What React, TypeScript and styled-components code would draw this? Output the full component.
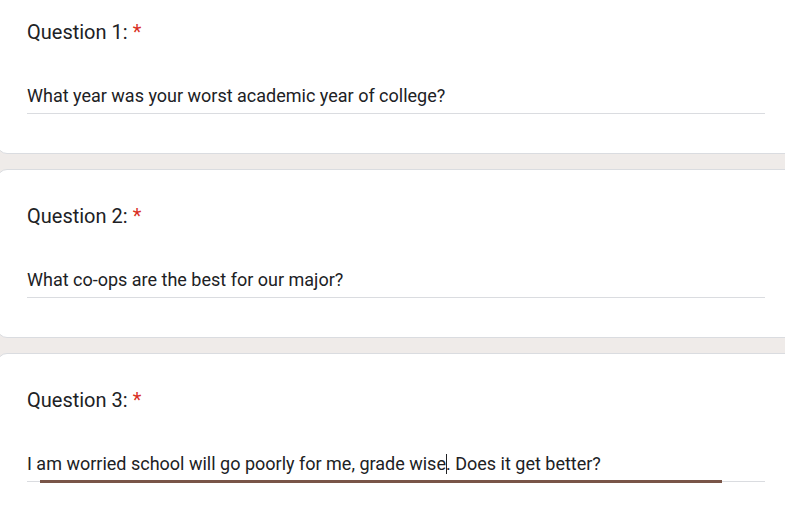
import React from "react";
import styled, { createGlobalStyle } from "styled-components";

const Global = createGlobalStyle`
  html, body { margin: 0; padding: 0; background: #efebe9; overflow: hidden; }
  body { font-family: Roboto, "Noto Sans", "Liberation Sans", sans-serif; color: #202124; }
`;

const Page = styled.div`
  display: flex;
  flex-direction: column;
  gap: 15px;
  margin-top: -15px;
  margin-left: -3px;
  width: 800px;
`;

const Card = styled.section`
  background: #ffffff;
  border: 1px solid #dadce0;
  border-radius: 10px;
  padding: 34px 29px 39px 29px;
  display: flex;
  flex-direction: column;
  gap: 40px;
`;

const Title = styled.div`
  font-size: 20px;
  line-height: 24px;
  font-weight: 400;
  color: #202124;
`;

const Required = styled.span`
  color: #d93025;
  margin-left: 5px;
`;

const Field = styled.div`
  position: relative;
  border-bottom: 1px solid #dadce0;
  padding-bottom: 5px;
  width: 738px;
`;

const Answer = styled.div`
  font-size: 18px;
  line-height: 24px;
  color: #202124;
  white-space: nowrap;
`;

const Caret = styled.span`
  display: inline-block;
  width: 0;
  height: 20px;
  border-left: 1px solid #202124;
  vertical-align: -4px;
  margin-right: -1px;
`;

const FocusLine = styled.div`
  position: absolute;
  bottom: -2px;
  height: 3px;
  background: #795548;
`;

type Q = { n: number; answer: React.ReactNode; focus?: { left: number; width: number } };

const questions: Q[] = [
  { n: 1, answer: "What year was your worst academic year of college?" },
  { n: 2, answer: "What co-ops are the best for our major?" },
  {
    n: 3,
    answer: (
      <>
        I am worried school will go poorly for me, grade wise<Caret />. Does it get better?
      </>
    ),
    focus: { left: 13, width: 682 },
  },
];

export default function App() {
  return (
    <>
      <Global />
      <Page>
        {questions.map((q) => (
          <Card key={q.n}>
            <Title>
              Question {q.n}:<Required>*</Required>
            </Title>
            <Field>
              <Answer>{q.answer}</Answer>
              {q.focus && <FocusLine style={{ left: q.focus.left, width: q.focus.width }} />}
            </Field>
          </Card>
        ))}
      </Page>
    </>
  );
}
